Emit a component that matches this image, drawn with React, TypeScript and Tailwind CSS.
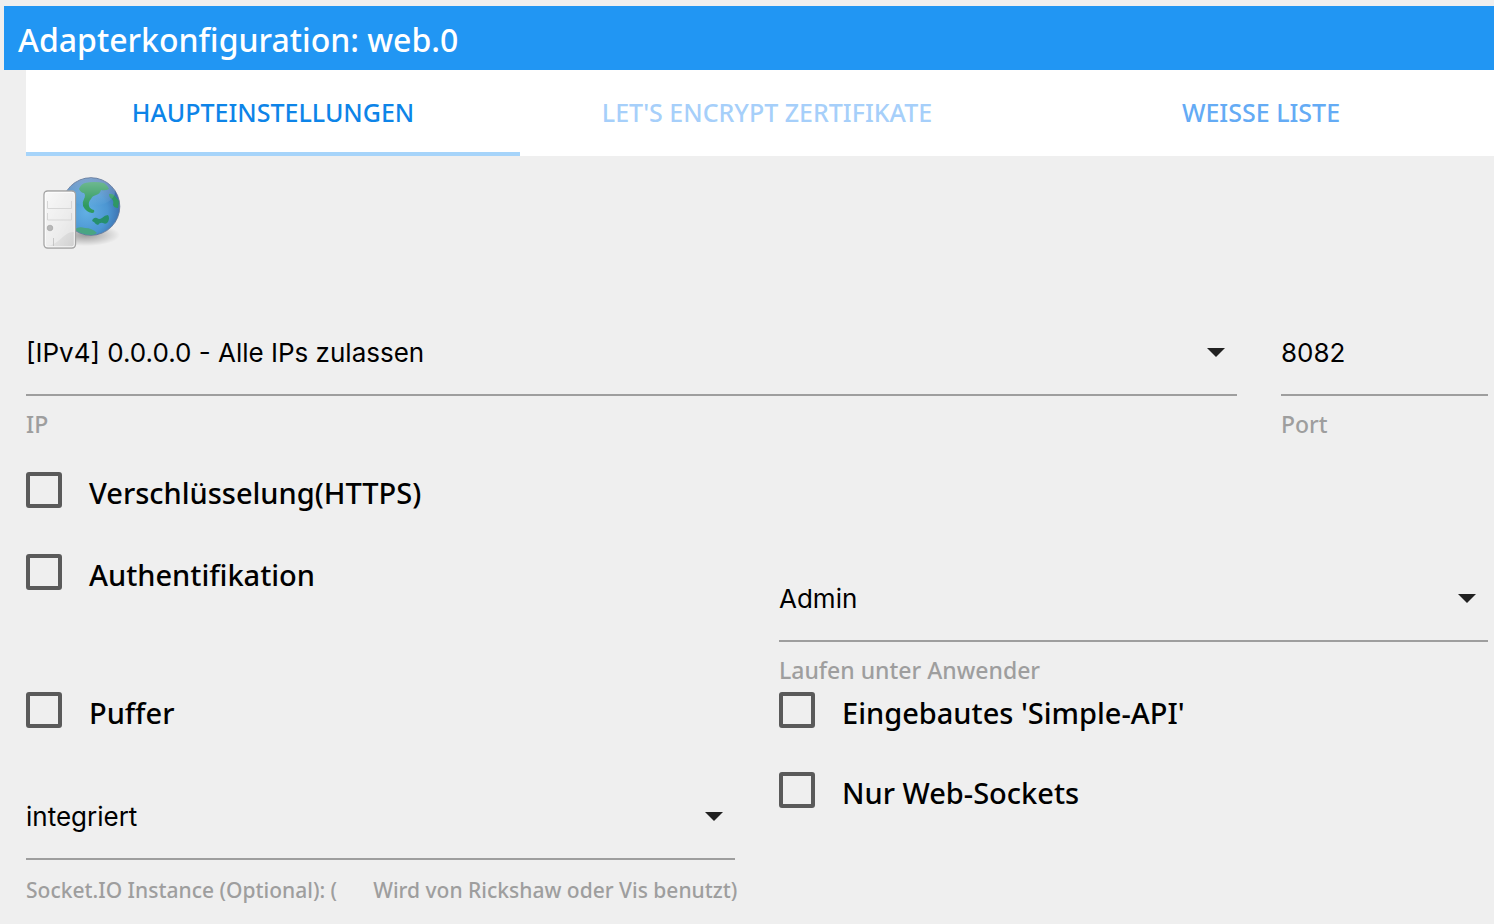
import { useState } from "react";
import type { ReactNode } from "react";

type TabProps = {
  label: string
  color: string
  active: boolean
  onClick: () => void
};

const Tab = ({label, color, active, onClick}: TabProps) => (
  <button
    type="button"
    role="tab"
    aria-selected={active}
    onClick={onClick}
    className={"h-full flex-1 border-b-4 pt-1 text-[25px] font-medium uppercase " + color + (active ? " border-[#a6d4fa]" : " border-transparent")}
  >
    {label}
  </button>
)

type SelectFieldProps = {
  id: string
  options: string[]
};

const SelectField = ({id, options}: SelectFieldProps) => (
  <div className="relative">
    <select
      id={id}
      className="block h-[88px] w-full appearance-none border-b-2 border-[#9e9e9e] bg-transparent pt-0.5 font-['Inter',sans-serif] text-[26px] text-black outline-none"
    >
      {options.map(option => <option key={option}>{option}</option>)}
    </select>
    <svg className="pointer-events-none absolute top-10 right-3 h-[9px] w-[18px] fill-[#212121]" viewBox="0 0 18 9" aria-hidden="true">
      <path d="M0 0h18L9 9z"/>
    </svg>
  </div>
)

type FieldLabelProps = {
  htmlFor: string
  className: string
  children: ReactNode
};

const FieldLabel = ({htmlFor, className, children}: FieldLabelProps) => (
  <label htmlFor={htmlFor} className={"mt-3 block font-medium whitespace-nowrap text-[#9e9e9e] " + className}>{children}</label>
)

const CheckField = ({label}: {label: string}) => (
  <label className="flex h-12 items-center gap-[27px] text-[29px] font-medium text-black">
    <input type="checkbox" className="size-9 shrink-0 appearance-none rounded-[3px] border-4 border-[#5a5a5a] checked:bg-[#2196f3]"/>
    <span className="pt-1.5">{label}</span>
  </label>
)

const WebLogo = () => (
  <svg className="size-20" viewBox="0 0 80 80" role="img" aria-label="web">
    <defs>
      <radialGradient id="ocean" cx="0.42" cy="0.6" r="0.62">
        <stop offset="0" stopColor="#62afe4"/>
        <stop offset="0.6" stopColor="#4c96d2"/>
        <stop offset="1" stopColor="#3a6cab"/>
      </radialGradient>
      <linearGradient id="shine" x1="0" y1="0" x2="0" y2="1">
        <stop offset="0" stopColor="#fff" stopOpacity="0.35"/>
        <stop offset="1" stopColor="#fff" stopOpacity="0"/>
      </linearGradient>
      <linearGradient id="tower" x1="0" y1="0" x2="1" y2="1">
        <stop offset="0" stopColor="#f6f6f6"/>
        <stop offset="0.6" stopColor="#e2e2e2"/>
        <stop offset="1" stopColor="#cfcfcf"/>
      </linearGradient>
      <radialGradient id="shadow">
        <stop offset="0" stopColor="#000" stopOpacity="0.35"/>
        <stop offset="1" stopColor="#000" stopOpacity="0"/>
      </radialGradient>
      <clipPath id="globe"><circle cx="49" cy="34.500" r="28.500"/></clipPath>
    </defs>
    <ellipse cx="44" cy="63" rx="34" ry="11" fill="url(#shadow)"/>
    <circle cx="49" cy="34.500" r="28.800" fill="url(#ocean)" stroke="#5d7294" strokeWidth="0.800"/>
    <g clipPath="url(#globe)">
      <path fill="#2f9a5f" d="M37 17Q39 12 43 11Q52 9 62 11Q66 14 67 17Q63 19 59 18Q58 22 54 23Q50 24 49 27Q46 30 47 34Q48 37 52 38Q53 41 50 41Q44 40 41 34Q40 30 42 27Q44 23 42 21Q39 21 37 17z"/>
      <path fill="#2f9765" d="M67 22Q69 21 72 23L77 29L76 36Q72 36 71 33Q72 29 70 27Q67 26 67 22z"/>
      <path fill="#268f6d" d="M51 47Q53 45 55 46Q57 48 60 46Q63 43 66 43Q68 46 66 50Q64 53 61 51Q58 50 56 53Q54 53 52 50Q49 49 51 47z"/>
      <path fill="#4aa583" d="M33 57Q37 54 43 56Q50 56 55 61L48 65L36 62z"/>
      <ellipse cx="49" cy="20" rx="24" ry="14" fill="url(#shine)"/>
    </g>
    <rect x="2" y="19" width="31.500" height="57" rx="3.500" fill="url(#tower)" stroke="#a3a3a3" strokeWidth="1.300"/>
    <rect x="3.300" y="20.300" width="29" height="54.500" rx="2.500" fill="none" stroke="#fff" strokeOpacity="0.800"/>
    <path fill="none" stroke="#c1c1c1" d="M5.500 29v7.500h24V29M5.500 41v7h24v-7"/>
    <path fill="#fff" fillOpacity="0.350" d="M3 20h29v40c-12 0-14 14-29 14z"/>
    <circle cx="8" cy="56" r="2.800" fill="#b8b8b8" stroke="#a0a0a0" strokeWidth="0.600"/>
    <path stroke="#bcbcbc" strokeWidth="0.800" d="M11.500 66v8"/>
  </svg>
)

const tabs = [
  {label: "Haupteinstellungen", color: "text-[#0d84e8]"},
  {label: "Let's Encrypt Zertifikate", color: "text-[#a6cffa]"},
  {label: "Weisse Liste", color: "text-[#64abf5]"},
]

const App = () => {
  const [tab, setTab] = useState(0)

  return (
    <div className="min-h-screen overflow-hidden bg-[#efefef] pt-1.5 pl-1 font-['Noto_Sans','Open_Sans',sans-serif]">
      <header className="flex h-16 items-center bg-[#2196f3] pt-1 pl-3.5">
        <h1 className="text-[32px] font-medium text-white">Adapterkonfiguration: web.0</h1>
      </header>
      <main className="pr-1.5 pl-[22px]">
        <div role="tablist" className="-mr-5 flex h-[86px] bg-white">
          {tabs.map(({label, color}, i) => (
            <Tab key={label} label={label} color={color} active={i === tab} onClick={() => setTab(i)}/>
          ))}
        </div>
        <div className="px-4 pt-4 pb-14">
          <WebLogo/>
        </div>
        <form>
          <div className="grid grid-cols-12 gap-x-11">
            <div className="col-span-10">
              <SelectField id="bind" options={["[IPv4] 0.0.0.0 - Alle IPs zulassen"]}/>
              <FieldLabel htmlFor="bind" className="text-[23px] leading-8">IP</FieldLabel>
            </div>
            <div className="col-span-2">
              <input
                id="port"
                type="text"
                defaultValue="8082"
                className="block h-[88px] w-full border-b-2 border-[#9e9e9e] bg-transparent pt-0.5 font-['Inter',sans-serif] text-[26px] text-black outline-none"
              />
              <FieldLabel htmlFor="port" className="text-[23px] leading-8">Port</FieldLabel>
            </div>
          </div>
          <div className="mt-[26px]">
            <CheckField label="Verschlüsselung(HTTPS)"/>
          </div>
          <div className="mt-[34px] grid grid-cols-2 gap-x-11">
            <CheckField label="Authentifikation"/>
            <div className="pt-1.5">
              <SelectField id="user" options={["Admin"]}/>
              <FieldLabel htmlFor="user" className="text-[23px] leading-8">Laufen unter Anwender</FieldLabel>
            </div>
          </div>
          <div className="grid grid-cols-2 gap-x-11">
            <CheckField label="Puffer"/>
            <CheckField label="Eingebautes 'Simple-API'"/>
          </div>
          <div className="mt-8 grid grid-cols-2 gap-x-11">
            <div className="pt-1.5">
              <SelectField id="socketio" options={["integriert"]}/>
              <FieldLabel htmlFor="socketio" className="text-[21px] leading-9">
                Socket.IO Instance (Optional): (<span className="ml-9">Wird von Rickshaw oder Vis benutzt)</span>
              </FieldLabel>
            </div>
            <CheckField label="Nur Web-Sockets"/>
          </div>
        </form>
      </main>
    </div>
  )
}

export default App
